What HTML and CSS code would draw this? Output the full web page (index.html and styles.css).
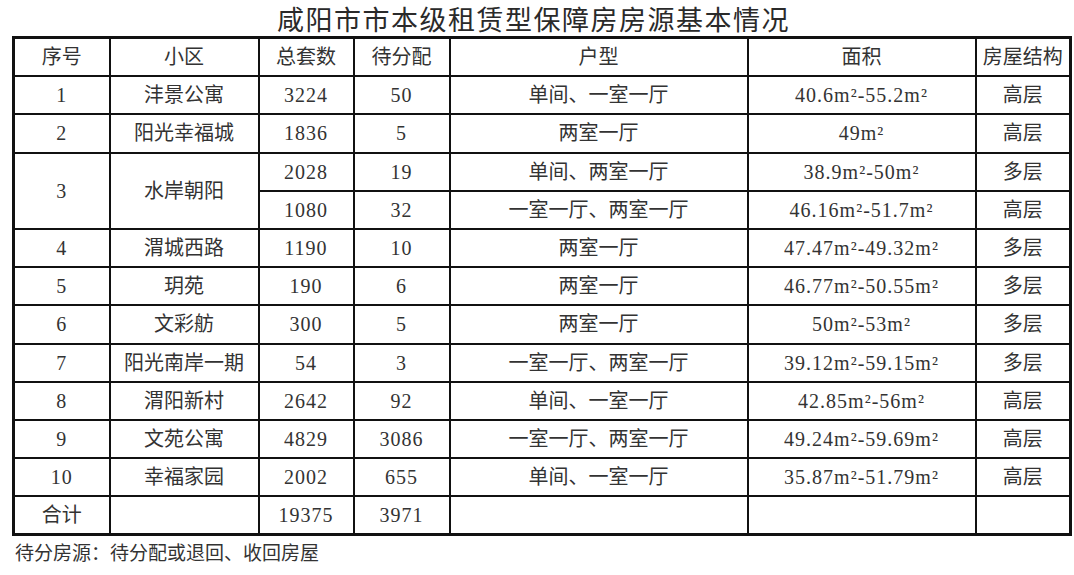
FILE: index.html
```html
<!DOCTYPE html>
<html lang="zh-CN">
<head>
<meta charset="utf-8">
<title>咸阳市市本级租赁型保障房房源基本情况</title>
<link rel="stylesheet" href="styles.css">
</head>
<body>
<div class="page">
  <h1 class="title">咸阳市市本级租赁型保障房房源基本情况</h1>
  <table class="grid">
    <colgroup>
      <col class="c-no"><col class="c-name"><col class="c-total"><col class="c-wait"><col class="c-type"><col class="c-area"><col class="c-struct">
    </colgroup>
    <tbody>
      <tr><td>序号</td><td>小区</td><td>总套数</td><td>待分配</td><td>户型</td><td>面积</td><td>房屋结构</td></tr>
      <tr><td class="n">1</td><td>沣景公寓</td><td class="n">3224</td><td class="n">50</td><td>单间、一室一厅</td><td class="n">40.6m²-55.2m²</td><td>高层</td></tr>
      <tr><td class="n">2</td><td>阳光幸福城</td><td class="n">1836</td><td class="n">5</td><td>两室一厅</td><td class="n">49m²</td><td>高层</td></tr>
      <tr><td class="n" rowspan="2">3</td><td rowspan="2">水岸朝阳</td><td class="n">2028</td><td class="n">19</td><td>单间、两室一厅</td><td class="n">38.9m²-50m²</td><td>多层</td></tr>
      <tr><td class="n">1080</td><td class="n">32</td><td>一室一厅、两室一厅</td><td class="n">46.16m²-51.7m²</td><td>高层</td></tr>
      <tr><td class="n">4</td><td>渭城西路</td><td class="n">1190</td><td class="n">10</td><td>两室一厅</td><td class="n">47.47m²-49.32m²</td><td>多层</td></tr>
      <tr><td class="n">5</td><td>玥苑</td><td class="n">190</td><td class="n">6</td><td>两室一厅</td><td class="n">46.77m²-50.55m²</td><td>多层</td></tr>
      <tr><td class="n">6</td><td>文彩舫</td><td class="n">300</td><td class="n">5</td><td>两室一厅</td><td class="n">50m²-53m²</td><td>多层</td></tr>
      <tr><td class="n">7</td><td>阳光南岸一期</td><td class="n">54</td><td class="n">3</td><td>一室一厅、两室一厅</td><td class="n">39.12m²-59.15m²</td><td>多层</td></tr>
      <tr><td class="n">8</td><td>渭阳新村</td><td class="n">2642</td><td class="n">92</td><td>单间、一室一厅</td><td class="n">42.85m²-56m²</td><td>高层</td></tr>
      <tr><td class="n">9</td><td>文苑公寓</td><td class="n">4829</td><td class="n">3086</td><td>一室一厅、两室一厅</td><td class="n">49.24m²-59.69m²</td><td>高层</td></tr>
      <tr><td class="n">10</td><td>幸福家园</td><td class="n">2002</td><td class="n">655</td><td>单间、一室一厅</td><td class="n">35.87m²-51.79m²</td><td>高层</td></tr>
      <tr><td>合计</td><td></td><td class="n">19375</td><td class="n">3971</td><td></td><td></td><td></td></tr>
    </tbody>
  </table>
  <p class="note">待分房源：待分配或退回、收回房屋</p>
</div>
</body>
</html>
```
FILE: styles.css
```css
html, body {
  margin: 0;
  padding: 0;
  background: #ffffff;
}
.page {
  width: 1074px;
  height: 575px;
  box-sizing: border-box;
  padding: 0 0 0 12px;
  font-family: "Liberation Serif", "Noto Sans CJK SC", serif;
  color: #333333;
}
.title {
  margin: 0;
  width: 1057px;
  box-sizing: border-box;
  padding-right: 14px;
  height: 36px;
  line-height: 38px;
  text-align: center;
  font-family: "Noto Sans CJK SC", sans-serif;
  font-weight: 400;
  font-size: 27px;
  letter-spacing: 1.5px;
  color: #2a2a2a;
}
.grid {
  border-collapse: collapse;
  table-layout: fixed;
  width: 1057px;
  border: 3px solid #111111;
}
.grid td {
  border: 2px solid #111111;
  height: 36.2px;
  padding: 0;
  text-align: center;
  vertical-align: middle;
  font-size: 20px;
  line-height: 24px;
  white-space: nowrap;
}
.grid td.n {
  letter-spacing: 1px;
}
.c-no { width: 96px; }
.c-name { width: 149px; }
.c-total { width: 95px; }
.c-wait { width: 96px; }
.c-type { width: 298px; }
.c-area { width: 228px; }
.c-struct { width: 95px; }
.note {
  margin: 6px 0 0 3px;
  font-size: 19px;
  line-height: 24px;
  color: #333333;
}
```
